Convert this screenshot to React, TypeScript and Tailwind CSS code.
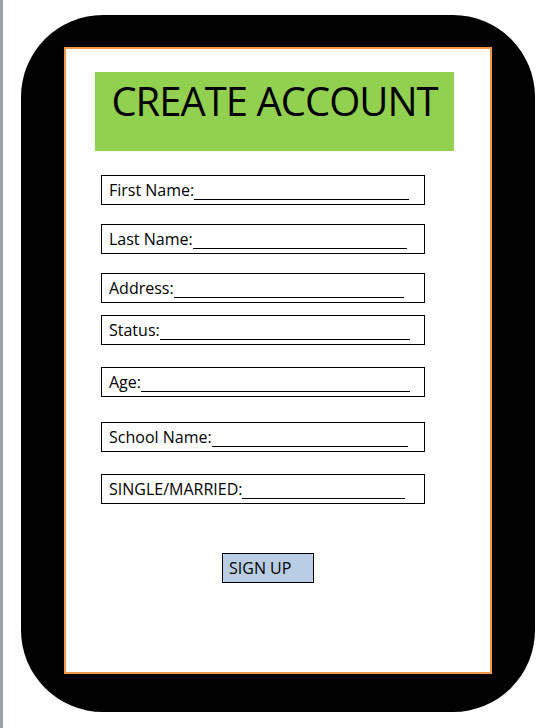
const fields = [
  { label: "First Name:", mt: "mt-0", mr: "mr-[15px]" },
  { label: "Last Name:", mt: "mt-[19px]", mr: "mr-[17px]" },
  { label: "Address:", mt: "mt-[19px]", mr: "mr-[20px]" },
  { label: "Status:", mt: "mt-[12px]", mr: "mr-[14px]" },
  { label: "Age:", mt: "mt-[22px]", mr: "mr-[14px]" },
  { label: "School Name:", mt: "mt-[25px]", mr: "mr-[16px]" },
  { label: "SINGLE/MARRIED:", mt: "mt-[22px]", mr: "mr-[19px]" },
];

export default function App() {
  return (
    <div className="flex min-h-screen bg-white font-['Open_Sans',sans-serif] text-black">
      <div className="w-[3px] bg-[#9ea2a6]" />
      <div className="ml-[18px] mt-[15px] h-[697px] w-[514px] rounded-[82px] bg-black px-[43px] pt-[32px]">
        <div className="h-[627px] border-2 border-[#f79646] bg-white pl-[29px] pt-[23px]">
          <div className="h-[79px] w-[359px] bg-[#92d050] pt-[9px] text-center text-[40px] leading-[40px] tracking-[-1px]">
            CREATE ACCOUNT
          </div>

          <div className="ml-[6px] mt-[24px] flex w-[324px] flex-col">
            {fields.map((f) => (
              <div
                key={f.label}
                className={`${f.mt} flex h-[30px] items-start border border-black pl-[7px] pt-[4px]`}
              >
                <span className="text-[16px] leading-[20px]">{f.label}</span>
                <span className={`${f.mr} mt-[19px] h-px flex-1 bg-black`} />
              </div>
            ))}
          </div>

          <div className="ml-[127px] mt-[49px] flex h-[30px] w-[92px] items-start border border-black bg-[#b9cde5] pl-[6px] pt-[4px] text-[16px] leading-[20px]">
            SIGN UP
          </div>
        </div>
      </div>
    </div>
  );
}
